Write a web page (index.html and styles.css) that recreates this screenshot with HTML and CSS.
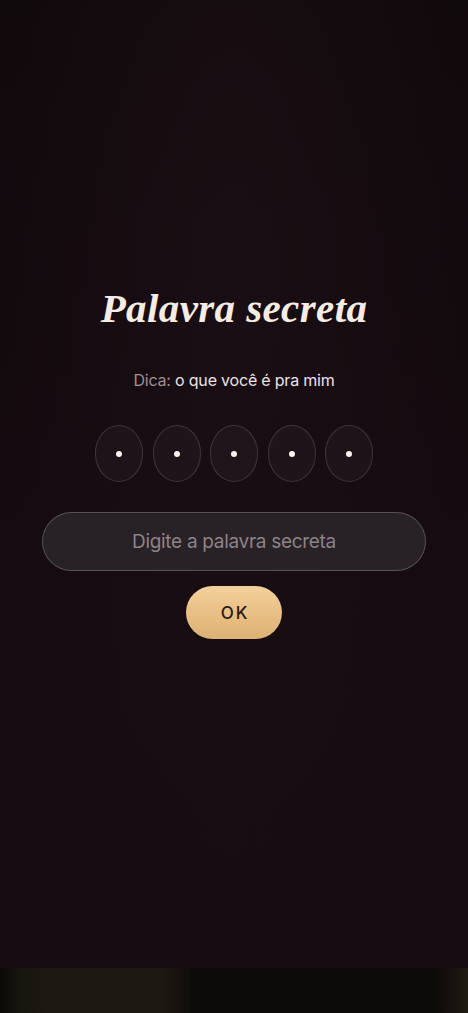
FILE: index.html
```html
<!DOCTYPE html>
<html lang="pt">
<head>
<meta charset="utf-8">
<title>Palavra secreta</title>
<link rel="stylesheet" href="styles.css">
</head>
<body>
<div class="screen">
  <main class="lock">
    <h1 class="title">Palavra secreta</h1>
    <p class="hint"><span class="hint-label">Dica:</span> o que você é pra mim</p>
    <div class="cells">
      <div class="cell"><span class="dot"></span></div>
      <div class="cell"><span class="dot"></span></div>
      <div class="cell"><span class="dot"></span></div>
      <div class="cell"><span class="dot"></span></div>
      <div class="cell"><span class="dot"></span></div>
    </div>
    <input class="field" type="password" placeholder="Digite a palavra secreta">
    <button class="ok" type="button">OK</button>
  </main>
</div>
<div class="bottom-strip">
  <div class="strip-edge"></div>
  <div class="strip-olive"></div>
  <div class="strip-dark"></div>
  <div class="strip-olive-right"></div>
</div>
</body>
</html>
```
FILE: styles.css
```css
* { box-sizing: border-box; }
html, body { margin: 0; padding: 0; }
body {
  background: #120a0e;
  font-family: Inter, "Noto Sans", "Liberation Sans", sans-serif;
  width: 468px;
  overflow: hidden;
}
.screen {
  height: 968px;
  background:
    radial-gradient(ellipse at 50% 30%, #190e13 0%, rgba(25,14,19,0) 70%),
    linear-gradient(180deg, #110a0d 0%, #150b10 55%, #160c11 100%);
}
.lock {
  display: flex;
  flex-direction: column;
  align-items: center;
  padding-top: 284px;
}
.title {
  margin: 0;
  font-family: "Liberation Serif", "DejaVu Serif", serif;
  font-style: italic;
  font-weight: 700;
  font-size: 41px;
  line-height: 48px;
  color: #f6ece4;
  letter-spacing: 0.4px;
}
.hint {
  margin: 37px 0 0;
  font-size: 16px;
  line-height: 22px;
  color: #ece4e4;
  letter-spacing: -0.2px;
}
.hint-label { color: #9b9196; }
.cells {
  display: flex;
  gap: 9.5px;
  margin-top: 34px;
}
.cell {
  width: 48px;
  height: 57px;
  border-radius: 24px / 28px;
  border: 1px solid rgba(255,255,255,0.14);
  background: rgba(255,255,255,0.03);
  display: flex;
  align-items: center;
  justify-content: center;
}
.dot {
  width: 6px;
  height: 6px;
  border-radius: 50%;
  background: #fbf3ee;
}
.field {
  margin-top: 30px;
  width: 384px;
  height: 59px;
  border-radius: 30px;
  border: 1.5px solid rgba(255,255,255,0.22);
  background: #282126;
  color: #eee;
  font-family: inherit;
  font-size: 19px;
  text-align: center;
  outline: none;
  letter-spacing: -0.3px;
}
.field::placeholder { color: #8c8388; }
.ok {
  margin-top: 15px;
  width: 96px;
  height: 53px;
  border-radius: 27px;
  border: none;
  background: linear-gradient(180deg, #f3d09b 0%, #e7bd82 60%, #dcb175 100%);
  color: #2b1a1a;
  font-family: inherit;
  font-size: 17px;
  font-weight: 500;
  letter-spacing: 2px;
  padding: 0 0 0 2px;
}
.bottom-strip {
  height: 45px;
  display: flex;
  background: #0b0908;
}
.strip-edge { width: 18px; background: linear-gradient(90deg, #0b0908, #17150f); }
.strip-olive { width: 172px; background: linear-gradient(90deg, #17150f 0%, #1c1912 20%, #1c1912 85%, #100d0b 100%); }
.strip-dark { flex: 1; background: #0d0a0a; }
.strip-olive-right { width: 34px; background: linear-gradient(90deg, #0d0a0a, #1e1b13); }
```
